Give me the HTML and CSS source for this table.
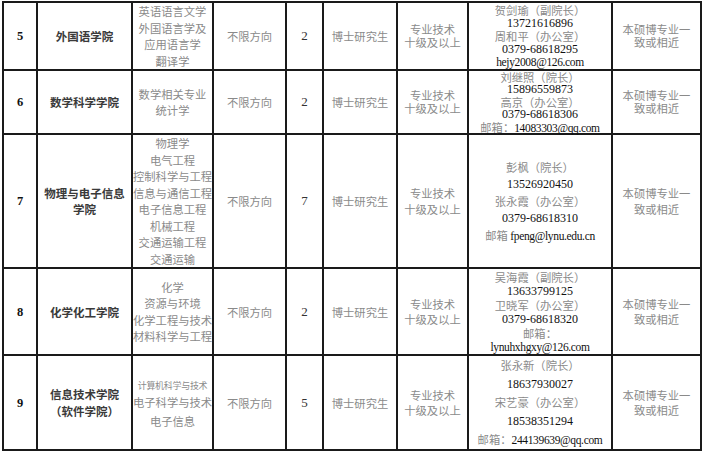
FILE: index.html
```html
<!DOCTYPE html>
<html lang="zh-CN">
<head>
<meta charset="utf-8">
<title>招聘岗位表</title>
<link rel="stylesheet" href="styles.css">
</head>
<body>
<table class="grid">
  <colgroup>
    <col class="c-no"><col class="c-college"><col class="c-major"><col class="c-dir"><col class="c-num"><col class="c-deg"><col class="c-title"><col class="c-contact"><col class="c-note">
  </colgroup>
  <tbody>
    <tr class="r5">
      <td class="no">5</td>
      <td class="college">外国语学院</td>
      <td class="zh lh16"><div class="ln">英语语言文学</div><div class="ln">外国语言学及</div><div class="ln">应用语言学</div><div class="ln">翻译学</div></td>
      <td class="zh">不限方向</td>
      <td class="num">2</td>
      <td class="zh">博士研究生</td>
      <td class="zh lh13"><div class="ln">专业技术</div><div class="ln">十级及以上</div></td>
      <td class="contact lh13"><div class="ln"><span class="zh">贺剑瑜（副院长）</span></div><div class="ln">13721616896</div><div class="ln"><span class="zh">周和平（办公室）</span></div><div class="ln">0379-68618295</div><div class="ln"><span class="mail">hejy2008@126.com</span></div></td>
      <td class="zh lh13"><div class="ln">本硕博专业一</div><div class="ln">致或相近</div></td>
    </tr>
    <tr class="r6">
      <td class="no">6</td>
      <td class="college">数学科学学院</td>
      <td class="zh lh16"><div class="ln">数学相关专业</div><div class="ln">统计学</div></td>
      <td class="zh">不限方向</td>
      <td class="num">2</td>
      <td class="zh">博士研究生</td>
      <td class="zh lh13"><div class="ln">专业技术</div><div class="ln">十级及以上</div></td>
      <td class="contact lh12"><div class="ln"><span class="zh">刘继照（院长）</span></div><div class="ln">15896559873</div><div class="ln"><span class="zh">高京（办公室）</span></div><div class="ln">0379-68618306</div><div class="ln"><span class="zh">邮箱：</span><span class="mail">14083303@qq.com</span></div></td>
      <td class="zh lh13"><div class="ln">本硕博专业一</div><div class="ln">致或相近</div></td>
    </tr>
    <tr class="r7">
      <td class="no">7</td>
      <td class="college lh16"><div class="ln">物理与电子信息</div><div class="ln">学院</div></td>
      <td class="zh lh16"><div class="ln">物理学</div><div class="ln">电气工程</div><div class="ln">控制科学与工程</div><div class="ln">信息与通信工程</div><div class="ln">电子信息工程</div><div class="ln">机械工程</div><div class="ln">交通运输工程</div><div class="ln">交通运输</div></td>
      <td class="zh">不限方向</td>
      <td class="num">7</td>
      <td class="zh">博士研究生</td>
      <td class="zh lh16"><div class="ln">专业技术</div><div class="ln">十级及以上</div></td>
      <td class="contact lh17"><div class="ln"><span class="zh">彭枫（院长）</span></div><div class="ln">13526920450</div><div class="ln"><span class="zh">张永霞（办公室）</span></div><div class="ln">0379-68618310</div><div class="ln"><span class="zh">邮箱 </span><span class="mail">fpeng@lynu.edu.cn</span></div></td>
      <td class="zh lh16"><div class="ln">本硕博专业一</div><div class="ln">致或相近</div></td>
    </tr>
    <tr class="r8">
      <td class="no">8</td>
      <td class="college">化学化工学院</td>
      <td class="zh lh16"><div class="ln">化学</div><div class="ln">资源与环境</div><div class="ln">化学工程与技术</div><div class="ln">材料科学与工程</div></td>
      <td class="zh">不限方向</td>
      <td class="num">2</td>
      <td class="zh">博士研究生</td>
      <td class="zh lh15"><div class="ln">专业技术</div><div class="ln">十级及以上</div></td>
      <td class="contact lh14"><div class="ln"><span class="zh">吴海霞（副院长）</span></div><div class="ln">13633799125</div><div class="ln"><span class="zh">卫晓军（办公室）</span></div><div class="ln">0379-68618320</div><div class="ln"><span class="zh">邮箱：</span></div><div class="ln"><span class="mail">lynuhxhgxy@126.com</span></div></td>
      <td class="zh lh15"><div class="ln">本硕博专业一</div><div class="ln">致或相近</div></td>
    </tr>
    <tr class="r9">
      <td class="no">9</td>
      <td class="college lh16"><div class="ln">信息技术学院</div><div class="ln">（软件学院）</div></td>
      <td class="zh lh18"><div class="ln"><span class="small">计算机科学与技术</span></div><div class="ln">电子科学与技术</div><div class="ln">电子信息</div></td>
      <td class="zh">不限方向</td>
      <td class="num">5</td>
      <td class="zh">博士研究生</td>
      <td class="zh lh15"><div class="ln">专业技术</div><div class="ln">十级及以上</div></td>
      <td class="contact lh18"><div class="ln"><span class="zh">张永新（院长）</span></div><div class="ln">18637930027</div><div class="ln"><span class="zh">宋艺豪（办公室）</span></div><div class="ln">18538351294</div><div class="ln"><span class="zh">邮箱：</span><span class="mail">244139639@qq.com</span></div></td>
      <td class="zh lh15"><div class="ln">本硕博专业一</div><div class="ln">致或相近</div></td>
    </tr>
  </tbody>
</table>
</body>
</html>
```

FILE: styles.css
```css
html, body {
  margin: 0;
  padding: 0;
  background: #ffffff;
}

body {
  padding: 1px 0 0 2px;
  font-family: "Liberation Serif", "Noto Sans CJK SC", serif;
}

.grid {
  border-collapse: collapse;
  table-layout: fixed;
  width: 698px;
}

.grid td {
  border: 2px solid #1a1a1a;
  padding: 0;
  text-align: center;
  vertical-align: middle;
  overflow: visible;
  white-space: nowrap;
  line-height: 14px;
}

.c-no { width: 34px; }
.c-college { width: 95px; }
.c-major { width: 81px; }
.c-dir { width: 73px; }
.c-num { width: 37px; }
.c-deg { width: 74px; }
.c-title { width: 71px; }
.c-contact { width: 144px; }
.c-note { width: 89px; }

.r5 { height: 67px; }
.r6 { height: 64px; }
.r7 { height: 134px; }
.r8 { height: 87px; }
.r9 { height: 95px; }

.zh {
  font-family: "Noto Sans CJK SC", "Liberation Sans", sans-serif;
  font-size: 11.3px;
  color: #8a8a8a;
}

.college {
  font-family: "Noto Sans CJK SC", "Liberation Sans", sans-serif;
  font-weight: 700;
  font-size: 11.5px;
  color: #3a3a3a;
}

.no {
  font-family: "Liberation Serif", serif;
  font-weight: 700;
  font-size: 12.5px;
  color: #111111;
}

.num {
  font-family: "Liberation Serif", serif;
  font-size: 13px;
  color: #333333;
}

.contact {
  font-family: "Liberation Serif", serif;
  font-size: 12px;
  color: #111111;
}

.mail {
  font-family: "Liberation Serif", serif;
  font-size: 11.5px;
  letter-spacing: -0.35px;
  color: #111111;
}

.small { font-size: 9px; letter-spacing: -0.3px; }

.ln { overflow: visible; }

.lh12 .ln { height: 12.4px; line-height: 12.4px; }
.lh13 .ln { height: 13px; line-height: 13px; }
.lh14 .ln { height: 14px; line-height: 14px; }
.lh15 .ln { height: 15px; line-height: 15px; }
.lh16 .ln { height: 16.5px; line-height: 16.5px; }
.lh17 .ln { height: 17px; line-height: 17px; }
.lh18 .ln { height: 18.5px; line-height: 18.5px; }
```
